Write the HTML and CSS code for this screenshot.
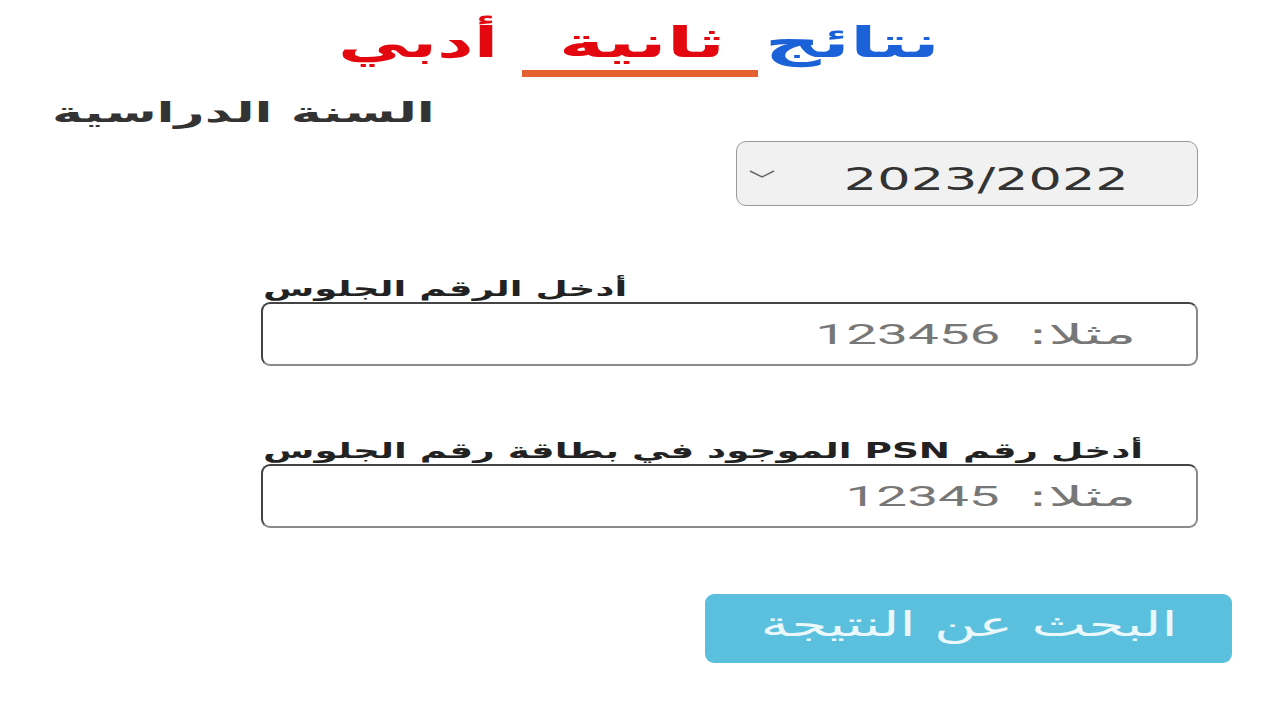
FILE: index.html
```html
<!DOCTYPE html>
<html lang="ar" dir="rtl">
<head>
<meta charset="utf-8">
<title>نتائج ثانية أدبي</title>
<link rel="stylesheet" href="styles.css">
</head>
<body>
<div class="page">
  <header class="head">
    <h1 class="title">
      <span class="tw tw-1 blue"><span class="sx sx-c">نتائج</span></span>
      <span class="tw tw-2 red"><span class="sx sx-c">ثانية</span></span>
      <span class="tw tw-3 red"><span class="sx sx-c">أدبي</span></span>
    </h1>
    <div class="bar"></div>
  </header>

  <div class="year-label-row">
    <div class="year-label"><span class="sx sx-l">السنة الدراسية</span></div>
  </div>

  <div class="select-row">
    <div class="select">
      <span class="select-text"><span class="sx sx-r">2023/2022</span></span>
      <svg class="chev" width="26" height="12" viewBox="0 0 26 12"><path d="M1 3 L13 9 L25 3" fill="none" stroke="#666" stroke-width="1.4"/></svg>
    </div>
  </div>

  <div class="field field-1">
    <div class="field-label"><span class="sx sx-l lab1">أدخل الرقم الجلوس</span></div>
    <div class="input">
      <span class="ph-word"><span class="sx sx-r">مثلا:</span></span>
      <span class="ph-num"><span class="sx sx-r">123456</span></span>
    </div>
  </div>

  <div class="field field-2">
    <div class="field-label"><span class="sx sx-l lab2">أدخل رقم PSN الموجود في بطاقة رقم الجلوس</span></div>
    <div class="input">
      <span class="ph-word"><span class="sx sx-r">مثلا:</span></span>
      <span class="ph-num ph-num-5"><span class="sx sx-r">12345</span></span>
    </div>
  </div>

  <div class="btn-row">
    <div class="btn"><span class="sx sx-c">البحث عن النتيجة</span></div>
  </div>
</div>
</body>
</html>
```

FILE: styles.css
```css
* { box-sizing: border-box; }
html, body { margin: 0; padding: 0; background: #fff; }
body {
  width: 1280px;
  height: 720px;
  overflow: hidden;
  font-family: "DejaVu Sans", sans-serif;
  direction: rtl;
}
.page { display: flex; flex-direction: column; }

.sx { display: inline-block; white-space: nowrap; }
.sx-c { transform-origin: center; }
.sx-l { transform-origin: left center; }
.sx-r { transform-origin: right center; }

/* title */
.head { display: flex; flex-direction: column; align-items: center; padding-top: 18px; }
.title {
  margin: 0; font-size: 42px; font-weight: bold; line-height: 50px;
  display: flex; justify-content: center; width: 587px;
}
.tw { display: block; text-align: center; }
.tw .sx { transform: scaleX(1.85); }
.tw-3 .sx { transform: scaleX(1.7); }
.tw-1 { width: 163px; }
.tw-2 { width: 163px; margin-right: 47px; }
.tw-3 { width: 144px; margin-right: 70px; }
.blue { color: #1b62d8; }
.red { color: #e3080f; }
.bar { width: 236px; height: 7px; background: #e5602f; margin-top: 2px; }

/* year label */
.year-label-row { display: flex; justify-content: flex-end; padding-left: 52px; margin-top: 18px; }
.year-label { font-size: 28px; font-weight: bold; color: #333; line-height: 36px; }
.year-label .sx { transform: scaleX(1.87); }

/* select */
.select-row { display: flex; justify-content: flex-start; padding-right: 82px; margin-top: 10px; }
.select {
  width: 462px; height: 65px;
  background: #f1f1f1;
  border: 1.5px solid #9a9a9a;
  border-radius: 10px;
  display: flex; align-items: center; justify-content: space-between;
  padding: 0 68px 0 12px;
}
.select-text { font-size: 32px; color: #333; direction: ltr; padding-top: 10px; }
.select-text .sx { transform: scaleX(1.64); }
.chev { margin-top: 0; }

/* fields */
.field { display: flex; flex-direction: column; align-items: stretch; margin-left: 261px; margin-right: 82px; }
.field-1 { margin-top: 70px; }
.field-2 { margin-top: 72px; }
.field-label { font-size: 21px; font-weight: bold; color: #222; line-height: 26px; text-align: left; padding-left: 2px; }
.lab1 { transform: scaleX(1.77); }
.lab2 { transform: scaleX(1.775); }
.input {
  height: 64px;
  border: 2.5px solid #444;
  border-right-color: #8a8a8a;
  border-bottom-color: #8a8a8a;
  border-radius: 9px;
  display: flex; align-items: center;
  padding-right: 59px;
  color: #777;
  font-size: 28px;
}
.ph-word { display: block; width: 102px; text-align: right; }
.ph-word .sx { transform: scaleX(2.2); }
.ph-num { display: block; width: 185px; text-align: right; margin-right: 35px; font-family: Roboto, "DejaVu Sans", sans-serif; }
.ph-num-5 { width: 154px; }
.ph-num .sx { transform: scaleX(1.96); }

/* button */
.btn-row { display: flex; justify-content: flex-start; padding-right: 48px; margin-top: 66px; }
.btn {
  width: 527px; height: 69px;
  background: #5bc0de;
  border-radius: 9px;
  display: flex; align-items: center; justify-content: center;
  color: #eaf7fb;
  font-size: 34px;
  padding-bottom: 10px;
}
.btn .sx { transform: scaleX(1.71); }
```
